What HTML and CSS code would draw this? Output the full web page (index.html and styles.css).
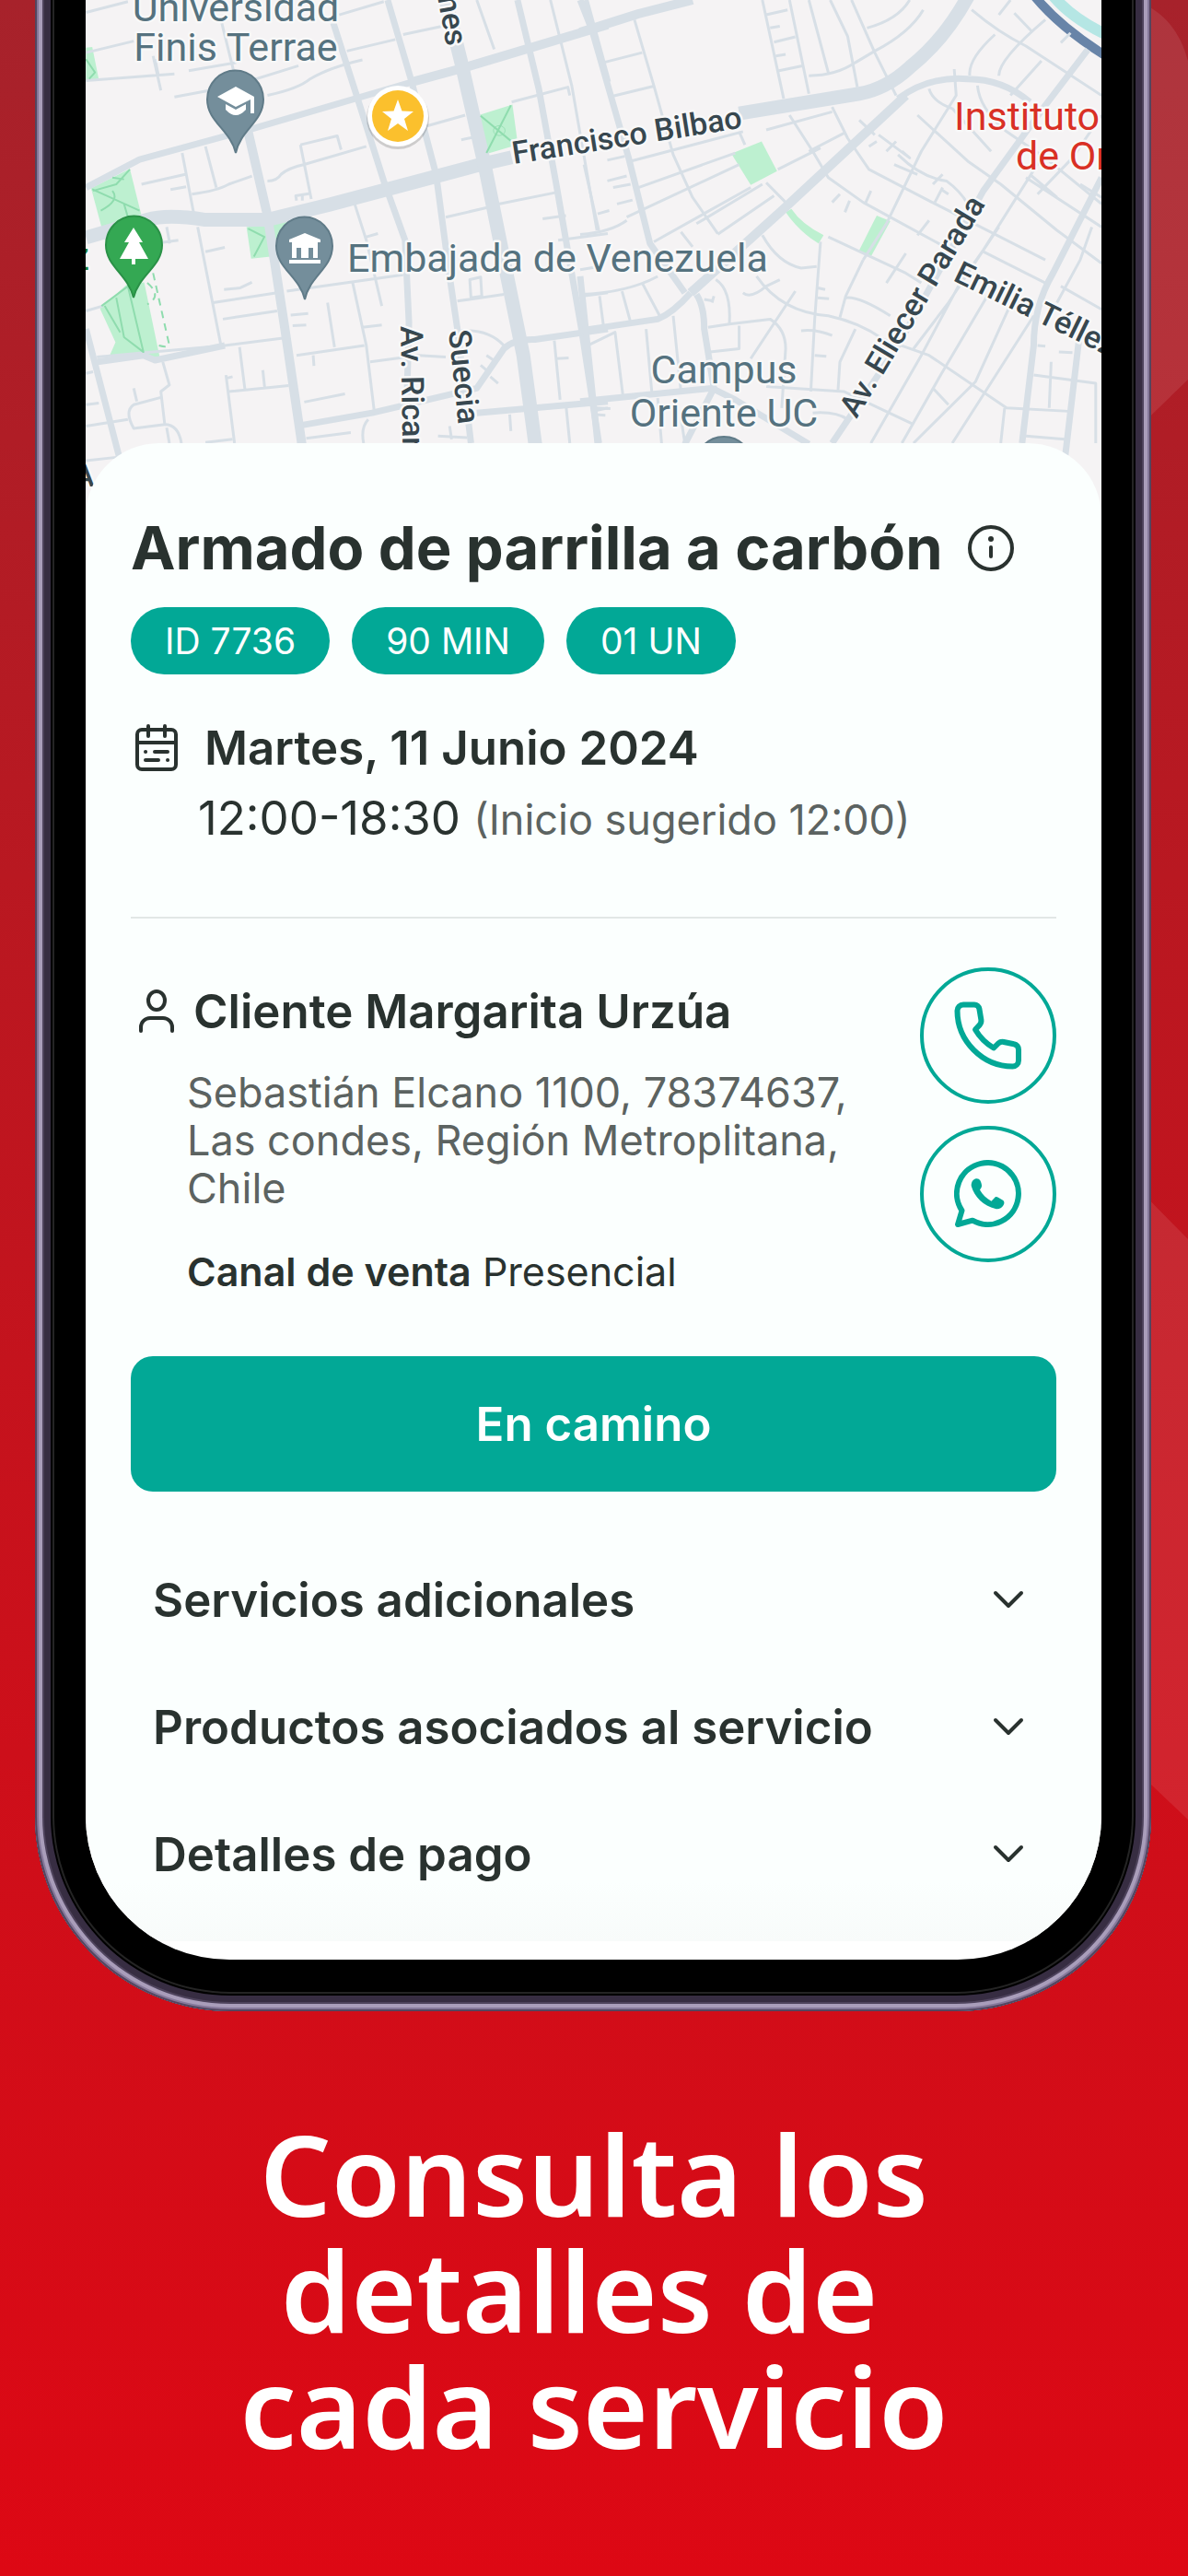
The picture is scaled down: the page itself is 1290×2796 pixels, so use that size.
FILE: index.html
```
<!DOCTYPE html>
<html lang="es">
<head>
  <meta charset="UTF-8">
  <meta name="viewport" content="width=device-width, initial-scale=1">
  <title>Detalle del servicio</title>
  <link rel="stylesheet" href="styles.css">
</head>
<body>
  <svg class="backdrop" viewBox="0 0 60 2000" aria-hidden="true">
    <path d="M0 0Q46 14 60 66V412L0 470z"/>
    <path d="M0 1284L60 1345V1975L0 1918z"/>
  </svg>

  <main class="phone">
    <div class="screen">
      <svg class="map" viewBox="93 0 1103 562" preserveAspectRatio="xMidYMin slice" role="img" aria-label="Mapa">
        <rect class="land" x="93" width="1103" height="562"/>

        <!-- west half -->
        <g transform="scale(.4209 .3571)">
          <g class="park">
            <path d="M222 145L238 143L255 242L222 245z"/>
            <path d="M235 572L335 513L366 660L262 690z"/>
            <path d="M636 690L760 665L740 720L700 730L698 780L648 786z"/>
            <path d="M1235 350L1322 318L1336 440L1258 467z"/>
            <path d="M258 938L330 862L372 858L412 1085L284 1078L298 1040z"/>
          </g>
          <g class="minor">
            <path d="M222 38L330 5M222 160L345 125M222 245L450 225M395 170L415 275M400 180L408 225"/>
            <path d="M450 295L600 262L770 200M487 215L610 190M570 60L610 250M690 290Q770 270 800 240Q850 205 935 182"/>
            <path d="M875 45L990 5M895 155L1020 120M1040 105L1160 75M1230 0L1275 150M1420 0L1475 260L1540 700"/>
            <path d="M470 465L500 650M530 445L558 570M365 560L478 530M440 576L480 568M495 590Q560 580 590 560L650 535"/>
            <path d="M690 550Q715 550 725 530Q745 510 785 500L945 445M775 440L870 413L880 455M775 440L803 605M765 610L763 595L800 588M780 610V592"/>
            <path d="M1095 385L1200 350M1190 425L1230 415M1320 310L1465 265L1470 290M1150 660L1260 630M1265 625L1435 585M1400 665L1460 655M1440 730L1568 710"/>
            <path d="M915 620L945 730L985 930M945 720L975 710M430 690L438 740M400 740L460 730M510 690L570 1050M530 765L580 752M578 880L620 875L650 858"/>
            <path d="M740 885L900 858L1040 835M550 920L715 890M575 970L715 945M845 920L863 1055M750 958L795 953M755 990L790 988M910 860L945 1050L965 1245M935 995L985 988"/>
            <path d="M222 945L265 930M250 1085L580 1050L730 1028M420 1100L437 1170L415 1190L425 1290L345 1302Q320 1250 345 1230L415 1208M345 1180L353 1220"/>
            <path d="M222 1135L240 1130M222 1230L255 1225M222 1295L330 1275M425 1290Q460 1290 468 1347M430 1300L437 1347M222 1400L300 1390"/>
            <path d="M618 1055L632 1185M590 1190L745 1172M583 1140L605 1347M583 1150L600 1145M678 1125L683 1180M765 1080L940 1050M808 1080L810 1112"/>
            <path d="M955 1100L1080 1080L1150 1085M785 1222L890 1197M790 1332L905 1315M950 1275Q930 1300 938 1347M530 1345L600 1335"/>
            <path d="M1180 915L1300 895M1212 850L1240 842L1243 900L1215 905zM1190 1005Q1260 1000 1300 1050M1255 1080L1280 1100M1240 1110L1265 1135M1265 1145L1285 1165"/>
            <path d="M1430 1035L1445 1215M1435 1090L1467 1088M1500 900L1568 890M1130 1325L1205 1330M1160 1295L1165 1335M1315 1260L1318 1310M1460 1230L1470 1347M1530 1250L1568 1240"/>
          </g>
          <g class="street">
            <path d="M222 570L360 485L640 395L1060 250L1568 75"/>
            <path d="M860 70L920 290L990 550L1045 730L1055 980L1050 1200"/>
            <path d="M1000 0L1060 240L1125 530L1160 840L1180 1000L1215 1347"/>
            <path d="M1335 0L1390 270L1435 560L1500 1000L1545 1347M1510 0L1568 250"/>
            <path d="M780 1292L960 1255L1230 1180L1300 1060Q1325 1030 1380 1032L1568 1000M1230 1255L1568 1220"/>
            <path d="M222 1000L310 1400M252 1100L370 1080L400 1095L580 1050"/>
          </g>
          <g class="avenue narrow">
            <path d="M640 400L690 655L735 1000L780 1360"/>
            <path d="M1060 250L1200 205L1568 75"/>
          </g>
          <g class="avenue">
            <path d="M222 722L380 668Q430 650 530 668L690 668L850 622L1240 500L1320 478"/>
            <path d="M1150 0L1190 190L1250 500L1310 850L1350 1080L1382 1360"/>
          </g>
          <g class="trail">
            <path d="M222 180L245 220L230 240M238 575L360 640M335 515L300 560L240 580M290 580Q310 610 260 640M320 620L330 660M290 540L320 545"/>
            <path d="M640 695L682 720L655 780M262 930L330 870L370 1070L320 1025L300 905M270 930L310 1010"/>
            <path d="M1240 352L1330 440M1318 320L1255 465"/><circle cx="1288" cy="397" r="15"/>
            <path stroke-dasharray="8 6" d="M395 830L435 1040Q440 1060 410 1050M380 860Q420 900 380 925"/>
          </g>
        </g>

        <!-- east half -->
        <g transform="translate(630) scale(.4209 .3571)">
          <g class="park">
            <path d="M390 467L468 430L508 520L440 562z"/>
            <path d="M530 645L545 635Q570 680 628 715L615 740Q565 705 530 645z"/>
            <path d="M765 655L800 672L750 780L718 765z"/>
          </g>
          <path class="river-bank" d="M1215 -20Q1265 55 1365 110"/>
          <path class="river" d="M1160 -30Q1230 80 1370 180"/>
          <g class="minor">
            <path d="M60 190L160 160M85 292L190 262M140 60L190 260L240 470L290 600L355 710M130 490L420 400M150 570L400 465M120 660L410 500"/>
            <path d="M70 487L115 475M70 550L120 535M85 570L130 560M45 650L75 640M95 620L135 608M0 713Q80 705 120 670M10 500L48 700M190 735L440 570M260 705L290 750"/>
            <path d="M355 712L500 595M300 680L470 560M470 0L525 300M540 0L590 285M480 45L535 30M490 85L515 80M500 128L555 112M505 170L530 165M513 215L573 200"/>
            <path d="M590 230Q660 230 710 190L760 155Q850 100 885 30M590 0L640 220M645 0L690 110L715 265M700 0L760 160L815 290M740 85Q820 60 850 0"/>
            <path d="M410 400L425 440M480 395L650 340M540 350L600 460L640 540L730 615L940 750M590 460L680 405M510 515L620 450M650 325L690 420L745 515L900 610L1200 790"/>
            <path d="M720 365L760 410M745 445L765 430M770 410L850 480L830 460M790 460L815 430M810 500L870 530M910 560L935 530M915 615L935 570M930 575L950 590"/>
            <path d="M480 555L530 615M470 715Q510 800 570 815L610 810M620 735L605 970L595 1190M730 790L685 900L670 965M650 615L670 590M683 645L695 610M735 620L750 580M640 720L840 830L880 860"/>
            <path d="M0 820L50 810M0 895Q120 890 200 840M50 900L60 990M108 885L130 980M160 860L205 960M455 840Q520 950 640 960Q720 980 780 1030L900 1080L1100 1240L1260 1250"/>
            <path d="M350 850Q390 880 385 985L330 995M345 900L340 920M320 910L345 915M385 985L490 970Q530 1000 530 1060L520 1240M410 990L410 1060L335 1070M555 885L440 1090M420 890Q440 910 480 870L515 850"/>
            <path d="M685 905Q720 900 800 960M710 1000L670 1100L665 1190M480 1175L680 1190L860 1290M570 1005Q610 1000 650 1020M605 1080L635 1083M613 875L632 880M613 905L642 908M600 1255Q660 1250 690 1275"/>
            <path d="M20 1050L90 1010L110 1200M170 1000L185 1195M240 960L260 1190M260 1270L270 1347M200 1210L210 1347M40 1240L78 1242M40 1260L65 1262"/>
            <path d="M1010 30Q1080 100 1150 140L1345 290M1070 105Q1000 180 1005 230M1190 185L1110 290M1080 230Q1080 180 1200 60M1120 40L1165 95M1080 45L1110 0M1240 130L1265 100"/>
            <path d="M965 210L970 290L880 460L790 680L730 790M1025 260Q1030 330 1100 400L1200 480L1345 620M900 270Q910 310 960 330L1060 460M870 350L1000 490L1085 560L1230 700L1345 800"/>
            <path d="M820 470Q880 540 945 550Q980 580 1000 620M1190 480L1040 760L980 860L880 1080L750 1347M1230 600L1160 530M1080 690L950 920L860 1060M1150 540L1345 690"/>
            <path d="M1040 765L1200 860M1120 900L1020 1160L860 1347M1050 900L930 1140L830 1347M1170 960L1040 1200L960 1347M910 1180L950 1230M870 715L900 670M790 860L840 770"/>
            <path d="M1345 350L1270 480L1180 590M1290 560L1345 600M1320 690L1290 790L1230 920M1240 870L1345 940M1180 1050L1200 1052M1235 1070L1270 1072M1170 1140L1330 1165V1347M1215 1100L1210 1240M1095 1240L1085 1347M1150 1325L1250 1335"/>
          </g>
          <g class="street">
            <path d="M0 0L30 90L125 480L180 740L270 890M0 1005L200 970Q240 950 285 890M0 1220L340 1180L400 1215L590 1350"/>
            <path d="M300 895Q320 930 320 1000L345 1180L270 1350M0 840L45 1347"/>
            <path d="M820 300Q900 230 1000 240Q1090 240 1160 310M1310 150L1200 320L1040 580L820 1050L650 1347"/>
            <path d="M1345 540L1220 830Q1170 930 1170 1050L1140 1347M1290 1000L1250 1400"/>
          </g>
          <g class="avenue narrow">
            <path d="M0 98L150 42L290 0"/>
            <path d="M840 290L520 640L285 890"/>
          </g>
          <g class="avenue">
            <path d="M410 345L720 285Q790 270 850 205Q940 120 1000 -10"/>
          </g>
        </g>

        <g class="place">
          <text x="256" y="23" text-anchor="middle">Universidad</text>
          <text x="256" y="66" text-anchor="middle">Finis Terrae</text>
          <text x="377" y="295">Embajada de Venezuela</text>
          <text x="786" y="416" text-anchor="middle">Campus</text>
          <text x="786" y="463" text-anchor="middle">Oriente UC</text>
          <text class="health" x="1036" y="141">Instituto</text>
          <text class="health" x="1103" y="184">de Or</text>
          <text class="nature" x="97" y="293" text-anchor="end">z</text>
        </g>
        <g class="road-name">
          <text transform="translate(558 178) rotate(-9)">Francisco Bilbao</text>
          <text transform="translate(472 -22) rotate(80)">ones</text>
          <text transform="translate(435 354) rotate(89)">Av. Ricar</text>
          <text transform="translate(487 359) rotate(84)">Suecia</text>
          <text transform="translate(930 455) rotate(-59)">Av. Eliecer Parada</text>
          <text transform="translate(1034 304) rotate(26)">Emilia Téllez</text>
          <text x="80" y="528">A</text>
        </g>

        <g class="pin">
          <path d="M256 166C250 141 225 132 225 108A30 31 0 0 1 286 108C286 132 261 141 256 166z"/>
          <path d="M331 325C325 300 300 291 300 267A30 31 0 0 1 361 267C361 291 336 300 331 325z"/>
          <path class="green" d="M145 323C139 298 115 289 115 266A30 31 0 0 1 176 266C176 289 151 298 145 323z"/>
          <circle cx="786" cy="505" r="31"/>
        </g>
        <g class="glyph">
          <path d="M236 105L256 94L276 105V123H272V108L256 116zM245 113L256 119L267 113V119Q256 131 245 119z"/>
          <path d="M314 263V260L331 253L348 260V263H345V280H340V269H335V280H327V269H322V280H317V263zM314 282H348V286H314z"/>
          <path d="M145 247L155 263H151L161 281H147V287H143V281H130L140 263H135z"/>
        </g>
        <circle class="star-shadow" cx="432" cy="128" r="34"/>
        <circle class="star-ring" cx="432" cy="126" r="33"/>
        <circle class="star-disc" cx="432" cy="126" r="28"/>
        <path class="glyph" d="M432 108L436.500 120.500L449 121L439 129L443 142L432 134L421 142L425 129L415 121L427.500 120.500z"/>
      </svg>

      <section class="sheet">
        <header class="title-row">
          <h1 class="title">Armado de parrilla a carbón</h1>
          <button type="button" class="info" aria-label="Información">
            <svg class="icon" viewBox="0 0 56 56"><circle cx="28" cy="28" r="23"/><path d="M28 27v10"/><circle class="dot" cx="28" cy="18" r="3"/></svg>
          </button>
        </header>
        <ul class="tags">
          <li class="tag">ID 7736</li>
          <li class="tag">90 MIN</li>
          <li class="tag">01 UN</li>
        </ul>

        <div class="date-row">
          <svg class="icon" viewBox="0 0 56 56" aria-hidden="true">
            <rect x="7" y="8" width="42" height="43" rx="5"/>
            <path d="M7 22h42M19 4v11M37 4v11M26 32h14M16 41h14M16 32h.1M40 41h.1"/>
          </svg>
          <strong class="strong">Martes, 11 Junio 2024</strong>
        </div>
        <p class="time-row">12:00-18:30 <span class="hint">(Inicio sugerido 12:00)</span></p>

        <hr class="divider">

        <div class="client">
          <div class="client-data">
            <div class="client-name">
              <svg class="icon" viewBox="0 0 56 56" aria-hidden="true">
                <ellipse cx="28" cy="16" rx="9" ry="10"/>
                <path d="M11 49v-4a10 10 0 0 1 10-10h14a10 10 0 0 1 10 10v4"/>
              </svg>
              <h2 class="strong">Cliente Margarita Urzúa</h2>
            </div>
            <p class="address">Sebastián Elcano 1100, 78374637,<br>Las condes, Región Metroplitana,<br>Chile</p>
            <p class="channel"><b>Canal de venta</b> Presencial</p>
          </div>
          <div class="contact">
            <button type="button" class="round" aria-label="Llamar">
              <svg viewBox="0 0 74 74"><path d="M10 3.500h12a5.500 5.500 0 0 1 5.400 4.600l2 12a7 7 0 0 1-1.800 5.500L23 30.500c5 8.500 11.500 15 20 20l5-5a7 7 0 0 1 6-1.500l11 2.200a6 6 0 0 1 5 6V64a6.500 6.500 0 0 1-6.500 6.500C31 70.500 3.500 43 3.500 10A6.500 6.500 0 0 1 10 3.500z"/></svg>
            </button>
            <button type="button" class="round" aria-label="WhatsApp">
              <svg viewBox="0 0 74 74"><path d="M8.500 55A33.500 33.500 0 1 1 20 65.700L4 70z"/><path class="solid" d="M23 20.500c4-1.500 6.500 2 7 7 .2 2-1 3.500-2 5 3 5.500 7 9 12.500 12.300l4-4.300c1-.8 2-.5 3 0l5.500 3.200c1.800 1.200 1.800 3.300.5 5.500-1.800 3-5 4.500-8.500 3.800C32 50 22 40 18.800 28.500c-.5-3.500 1.200-7 4.200-8z"/></svg>
            </button>
          </div>
        </div>

        <button type="button" class="primary">En camino</button>

        <div class="accordion">
          <button type="button" class="accordion-row" aria-expanded="false">Servicios adicionales
            <svg class="icon" viewBox="0 0 56 56" aria-hidden="true"><path d="M14 21l14 14 14-14"/></svg>
          </button>
          <button type="button" class="accordion-row" aria-expanded="false">Productos asociados al servicio
            <svg class="icon" viewBox="0 0 56 56" aria-hidden="true"><path d="M14 21l14 14 14-14"/></svg>
          </button>
          <button type="button" class="accordion-row" aria-expanded="false">Detalles de pago
            <svg class="icon" viewBox="0 0 56 56" aria-hidden="true"><path d="M14 21l14 14 14-14"/></svg>
          </button>
        </div>
      </section>
    </div>
  </main>

  <p class="caption">Consulta los<br>detalles de&nbsp;<br>cada servicio</p>
</body>
</html>
```
FILE: styles.css
```
* {
  box-sizing: border-box;
}
body {
  position: relative;
  margin: 0;
  min-height: 100vh;
  overflow-x: hidden;
  background: linear-gradient(#a7222b 0%, #b91821 34%, #cd0f1a 68%, #dd0814 100%);
  color: #29322f;
  font-family: Inter, "Liberation Sans", sans-serif;
}
h1, h2, p, ul {
  margin: 0;
  padding: 0;
}
button {
  padding: 0;
  border: none;
  background: none;
  color: inherit;
  font-family: inherit;
  cursor: pointer;
}
svg {
  display: block;
  flex: none;
}
.backdrop {
  position: absolute;
  top: 0;
  right: 0;
  width: 60px;
  height: 2000px;
  fill: rgba(255, 255, 255, .09);
}

/* phone body, its top runs off the page */
.phone {
  position: relative;
  margin: -60px 40px 0 38px;
  padding: 60px 54px 56px 55px;
  border-radius: 0 0 212px 212px;
  background: #000;
  box-shadow:
    inset 0 0 0 2px #54455f,
    inset 0 0 0 4px #85789a,
    inset 0 0 0 8px #a99dba,
    inset 0 0 0 10px #4e435c,
    inset 0 0 0 17px #372d42,
    inset 0 0 0 19px #000,
    inset 0 0 0 21px #242424;
}
.screen {
  padding-bottom: 20px;
  overflow: hidden;
  border-radius: 0 0 156px 156px;
  background: #fff;
}

/* map */
.map {
  width: 100%;
  height: 562px;
  font-family: Roboto, "Liberation Sans", sans-serif;
}
.map path {
  vector-effect: non-scaling-stroke;
}
.land {
  fill: #f5f3f4;
}
.park {
  fill: #bdf0d0;
}
.minor, .street, .avenue, .trail, .river, .river-bank {
  fill: none;
  stroke: #d7dfe6;
  stroke-linejoin: round;
}
.minor {
  stroke-width: 3px;
}
.street {
  stroke-width: 7px;
}
.avenue {
  stroke-width: 15px;
}
.narrow {
  stroke-width: 10px;
}
.trail {
  stroke: #8fdcae;
  stroke-width: 2px;
}
.river {
  stroke: #6884a8;
  stroke-width: 10px;
}
.river-bank {
  stroke: #b5e6e4;
  stroke-width: 12px;
}
.place text, .road-name text {
  paint-order: stroke;
  stroke: #f8f8f8;
  stroke-width: 5px;
  stroke-linejoin: round;
}
.place {
  fill: #55727f;
  font-size: 43px;
}
.road-name {
  fill: #37474f;
  font-size: 34px;
  font-weight: 500;
}
.health {
  fill: #d93025;
}
.nature {
  fill: #188038;
}
.pin {
  fill: #748e9b;
  stroke: #607b88;
  stroke-width: 2px;
}
.green {
  fill: #34a853;
  stroke: #2a9147;
}
.glyph, .star-ring {
  fill: #fff;
}
.glyph {
  stroke: none;
}
.star-shadow {
  fill: rgba(0, 0, 0, .16);
}
.star-disc {
  fill: #fbc02d;
}

/* sheet over the lower edge of the map */
.sheet {
  position: relative;
  margin-top: -81px;
  padding: 74px 49px 26px;
  border-radius: 80px 80px 0 0;
  background: linear-gradient(#fbfffe, #fbfffe 96%, #f8fbfa);
}
.icon {
  width: 56px;
  height: 56px;
  fill: none;
  stroke: #29322f;
  stroke-width: 4px;
  stroke-linecap: round;
  stroke-linejoin: round;
}
.icon .dot {
  fill: #29322f;
  stroke: none;
}
.title-row {
  display: flex;
  align-items: center;
  gap: 24px;
}
.title {
  font-size: 65px;
  font-weight: 700;
  line-height: 80px;
}
.tags {
  display: flex;
  gap: 24px;
  margin-top: 24px;
  list-style: none;
}
.tag {
  padding: 0 37px;
  border-radius: 37px;
  background: #02a896;
  color: #fff;
  font-size: 39px;
  line-height: 73px;
}
.strong {
  font-size: 51px;
  font-weight: 600;
  line-height: 60px;
}
.date-row {
  display: flex;
  align-items: center;
  gap: 24px;
  margin-top: 50px;
}
.time-row {
  margin-top: 16px;
  padding-left: 73px;
  font-size: 51px;
  line-height: 60px;
}
.hint {
  color: #5c6361;
  font-size: 45px;
}
.divider {
  height: 2px;
  margin: 75px 0 53px;
  border: none;
  background: #e2e7e6;
}
.client {
  display: flex;
  justify-content: space-between;
  gap: 24px;
}
.client-data {
  flex: 1;
  padding-top: 18px;
}
.client-name {
  display: flex;
  align-items: center;
  gap: 12px;
}
.address, .channel {
  padding-left: 61px;
  line-height: 52px;
}
.address {
  margin-top: 32px;
  color: #5c6361;
  font-size: 45px;
}
.channel {
  margin-top: 38px;
  font-size: 43px;
}
.channel b {
  font-weight: 600;
}
.contact {
  display: flex;
  flex-direction: column;
  gap: 24px;
}
.round {
  display: flex;
  align-items: center;
  justify-content: center;
  width: 148px;
  height: 148px;
  border: 4px solid #02a896;
  border-radius: 50%;
}
.round svg {
  width: 74px;
  height: 74px;
  fill: none;
  stroke: #02a896;
  stroke-width: 6px;
  stroke-linejoin: round;
}
.round .solid {
  fill: #02a896;
  stroke: none;
}
.primary {
  width: 100%;
  height: 147px;
  margin-top: 66px;
  border-radius: 24px;
  background: #02a896;
  color: #fff;
  font-size: 51px;
  font-weight: 600;
}
.accordion {
  display: flex;
  flex-direction: column;
  margin-top: 48px;
}
.accordion-row {
  display: flex;
  align-items: center;
  justify-content: space-between;
  height: 138px;
  padding: 0 24px;
  font-size: 51px;
  font-weight: 600;
}

.caption {
  margin-top: 113px;
  padding-bottom: 60px;
  color: #fff;
  font-family: "Noto Sans", "Open Sans", sans-serif;
  font-size: 122px;
  font-weight: 600;
  line-height: 126px;
  text-align: center;
}
```
